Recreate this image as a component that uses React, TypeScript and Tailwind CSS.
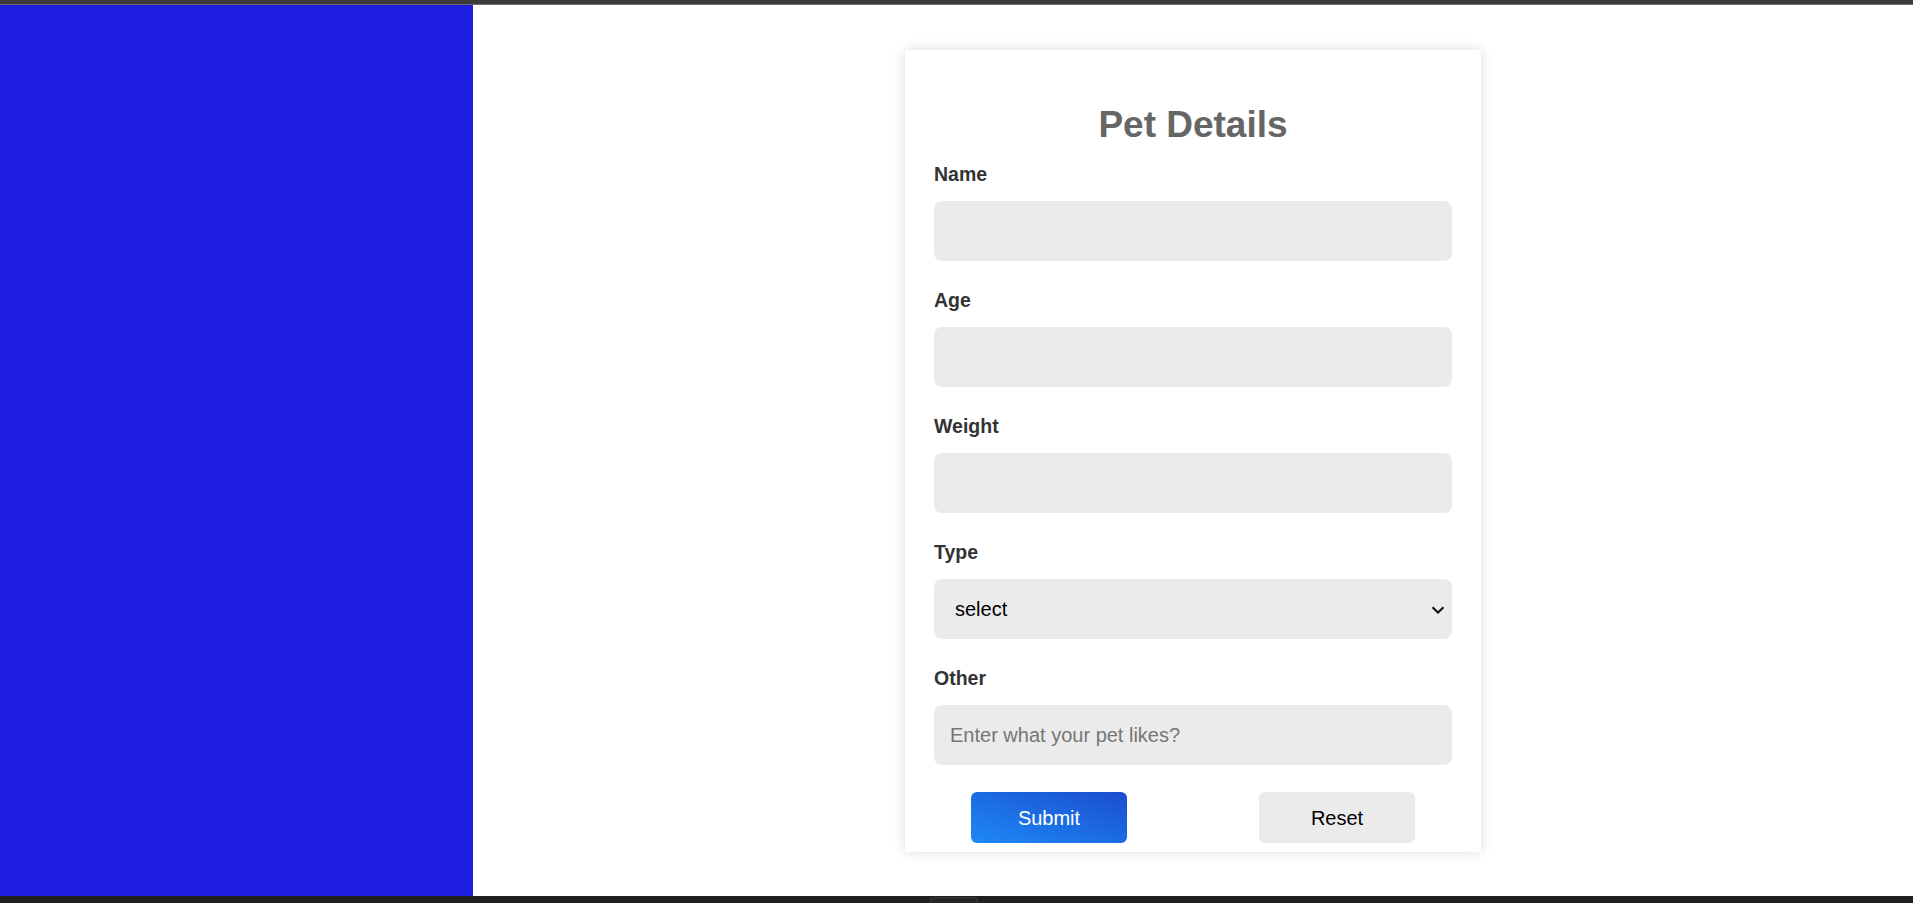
import React from 'react';

const fields = ['Name', 'Age', 'Weight'];

export default function App() {
  return (
    <div className="h-[903px] flex flex-col bg-white font-['Liberation_Sans',Arial,sans-serif]">
      {/* top strip */}
      <div className="h-[4px] bg-[#3c3c3c]" />
      <div className="h-px bg-[#6b6b6b]" />

      <div className="flex flex-1 min-h-0">
        <aside className="w-[473px] bg-[#1d1de0]" />

        <main className="flex-1 flex justify-center pt-[45px]">
          <form
            className="w-[576px] h-[802px] bg-white px-[29px] pt-[54px] shadow-[0_0_12px_rgba(0,0,0,0.14)]"
            onSubmit={(e) => e.preventDefault()}
          >
            <h1 className="text-center text-[37px] leading-[42px] font-bold text-[#666666]">Pet Details</h1>

            {fields.map((f, i) => (
              <div key={f} className={i === 0 ? 'mt-[17px]' : 'mt-[28px]'}>
                <label className="block text-[19.5px] leading-[22px] font-bold text-[#333333]">{f}</label>
                <input
                  type="text"
                  className="mt-4 block w-full h-[60px] rounded-lg bg-[#ebebeb] px-4 text-[20px] text-black outline-none"
                />
              </div>
            ))}

            <div className="mt-[28px]">
              <label className="block text-[19.5px] leading-[22px] font-bold text-[#333333]">Type</label>
              <div className="relative mt-4">
                <select className="block w-full h-[60px] appearance-none rounded-lg bg-[#ebebeb] pl-[21px] pr-8 text-[20px] text-black outline-none">
                  <option>select</option>
                  <option>Dog</option>
                  <option>Cat</option>
                  <option>Bird</option>
                </select>
                <svg
                  className="pointer-events-none absolute right-[7px] top-[27px]"
                  width="14"
                  height="8"
                  viewBox="0 0 14 8"
                  fill="none"
                >
                  <path d="M1.5 1.2 L7 6.5 L12.5 1.2" stroke="#111" strokeWidth="2" />
                </svg>
              </div>
            </div>

            <div className="mt-[28px]">
              <label className="block text-[19.5px] leading-[22px] font-bold text-[#333333]">Other</label>
              <input
                type="text"
                placeholder="Enter what your pet likes?"
                className="mt-4 block w-full h-[60px] rounded-lg bg-[#ebebeb] px-4 text-[20px] text-black outline-none placeholder:text-[#767676]"
              />
            </div>

            <div className="mt-[27px] flex justify-between px-[37px]">
              <button
                type="submit"
                className="w-[156px] h-[51px] rounded-md bg-linear-to-tr from-[#1f88f6] to-[#1c4dcf] text-[20px] text-white"
              >
                Submit
              </button>
              <button type="reset" className="w-[156px] h-[51px] rounded-md bg-[#ebebeb] text-[20px] text-black">
                Reset
              </button>
            </div>
          </form>
        </main>
      </div>

      {/* bottom strip */}
      <div className="relative h-[7px] bg-[#1f1f1f]">
        <div className="absolute left-[930px] top-[1px] h-[6px] w-[48px] rounded-t-[4px] border border-b-0 border-[#3a3a3a] bg-[#262626]" />
      </div>
    </div>
  );
}
